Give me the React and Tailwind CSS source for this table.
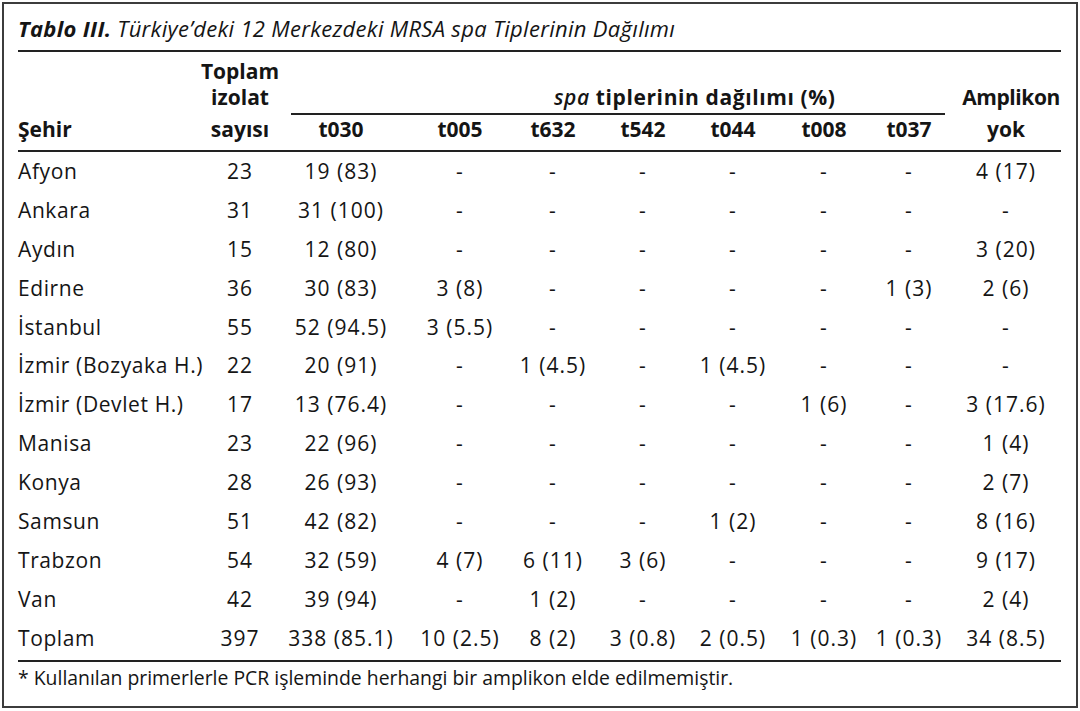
import React from "react";

const rows = [
  ["Afyon", "23", "19 (83)", "-", "-", "-", "-", "-", "-", "4 (17)"],
  ["Ankara", "31", "31 (100)", "-", "-", "-", "-", "-", "-", "-"],
  ["Aydın", "15", "12 (80)", "-", "-", "-", "-", "-", "-", "3 (20)"],
  ["Edirne", "36", "30 (83)", "3 (8)", "-", "-", "-", "-", "1 (3)", "2 (6)"],
  ["İstanbul", "55", "52 (94.5)", "3 (5.5)", "-", "-", "-", "-", "-", "-"],
  ["İzmir (Bozyaka H.)", "22", "20 (91)", "-", "1 (4.5)", "-", "1 (4.5)", "-", "-", "-"],
  ["İzmir (Devlet H.)", "17", "13 (76.4)", "-", "-", "-", "-", "1 (6)", "-", "3 (17.6)"],
  ["Manisa", "23", "22 (96)", "-", "-", "-", "-", "-", "-", "1 (4)"],
  ["Konya", "28", "26 (93)", "-", "-", "-", "-", "-", "-", "2 (7)"],
  ["Samsun", "51", "42 (82)", "-", "-", "-", "1 (2)", "-", "-", "8 (16)"],
  ["Trabzon", "54", "32 (59)", "4 (7)", "6 (11)", "3 (6)", "-", "-", "-", "9 (17)"],
  ["Van", "42", "39 (94)", "-", "1 (2)", "-", "-", "-", "-", "2 (4)"],
  ["Toplam", "397", "338 (85.1)", "10 (2.5)", "8 (2)", "3 (0.8)", "2 (0.5)", "1 (0.3)", "1 (0.3)", "34 (8.5)"],
];

const types = ["t030", "t005", "t632", "t542", "t044", "t008", "t037"];
const typeCols = [
  "col-start-3",
  "col-start-4",
  "col-start-5",
  "col-start-6",
  "col-start-7",
  "col-start-8",
  "col-start-9",
];

const gridCols =
  "grid grid-cols-[196px_52px_150px_88px_98px_82px_98px_84px_86px_108px]";

export default function App() {
  return (
    <div
      className="bg-white w-[1080px] h-[711px] pt-[2px] pl-[2px] text-[#151515]"
      style={{ fontFamily: '"Open Sans", "Noto Sans", sans-serif' }}
    >
      <div className="w-[1076px] h-[706px] border-2 border-[#3c3c3c] pl-[14px] pr-[15px]">
        {/* Title */}
        <div className="h-[46px] flex items-center pt-[3px] text-[22px] italic whitespace-nowrap tracking-[0.3px]">
          <span className="font-bold">Tablo III.</span>
          <span>&nbsp;Türkiye’deki 12 Merkezdeki MRSA spa Tiplerinin Dağılımı</span>
        </div>
        <div className="h-[2px] bg-[#222]" />

        {/* Header */}
        <div
          className={`${gridCols} grid-rows-[30px_22px_7px_28px] pt-[4px] pb-[7px] text-[21px] font-bold whitespace-nowrap`}
        >
          <div className="col-start-2 row-start-1 flex justify-center items-center leading-none">
            Toplam
          </div>
          <div className="col-start-2 row-start-2 flex justify-center items-center leading-none">
            izolat
          </div>
          <div className="col-start-2 row-start-4 flex justify-center items-center leading-none">
            sayısı
          </div>
          <div className="col-start-1 row-start-4 flex items-center leading-none">
            Şehir
          </div>
          <div className="col-start-3 col-span-7 row-start-2 flex items-center leading-none pl-[288px] tracking-[0.6px]">
            <span>
              <span className="italic font-semibold">spa</span> tiplerinin dağılımı (%)
            </span>
          </div>
          <div className="col-start-3 col-span-7 row-start-3 self-end h-[2px] bg-[#222] ml-[25px] mr-[7px]" />
          <div className="col-start-10 row-start-2 flex justify-end items-center leading-none tracking-[-0.4px]">
            Amplikon
          </div>
          <div className="col-start-10 row-start-4 flex justify-center items-center leading-none">
            yok
          </div>
          {types.map((t, i) => (
            <div
              key={t}
              className={`${typeCols[i]} row-start-4 flex justify-center items-center leading-none`}
            >
              {t}
            </div>
          ))}
        </div>
        <div className="h-[2px] bg-[#222]" />

        {/* Body */}
        <div className="text-[21px] whitespace-nowrap pb-[2px]">
          {rows.map((r, ri) => (
            <div key={ri} className={`${gridCols} h-[38.9px] items-center`}>
              {r.map((c, ci) => (
                <div
                  key={ci}
                  className={
                    ci === 0
                      ? "flex items-center leading-none tracking-[0.6px]"
                      : "flex justify-center items-center leading-none tracking-[1px]"
                  }
                >
                  {c}
                </div>
              ))}
            </div>
          ))}
        </div>
        <div className="h-[2px] bg-[#222]" />

        {/* Footnote */}
        <div className="h-[32px] flex items-center text-[19.4px] whitespace-nowrap">
          * Kullanılan primerlerle PCR işleminde herhangi bir amplikon elde edilmemiştir.
        </div>
      </div>
    </div>
  );
}
